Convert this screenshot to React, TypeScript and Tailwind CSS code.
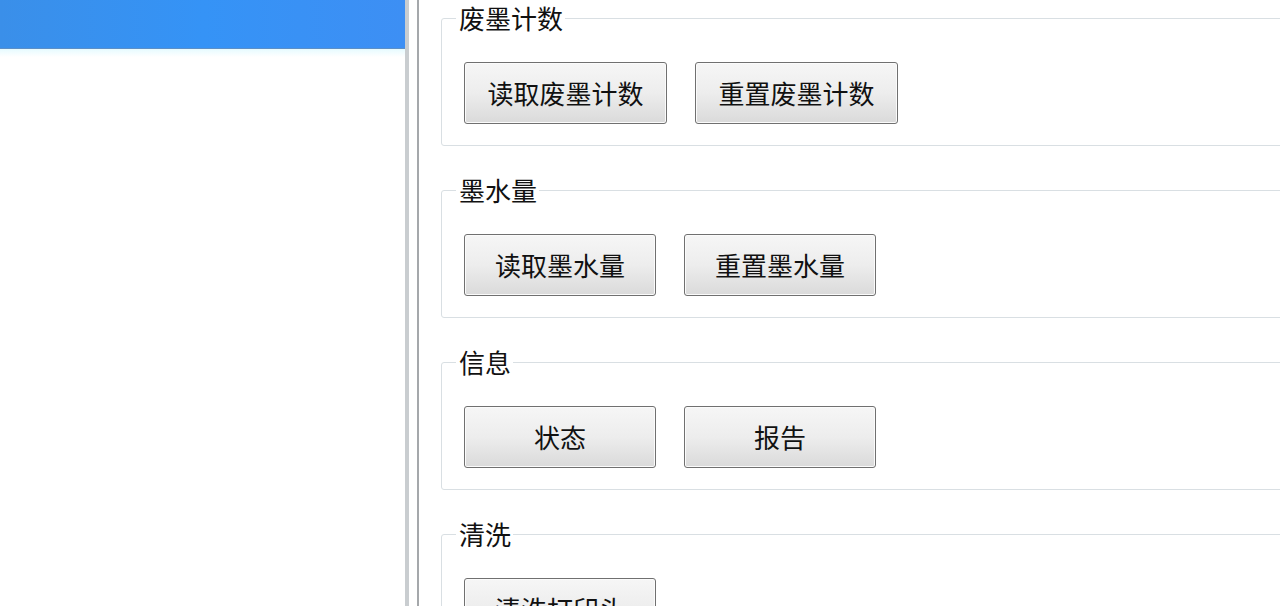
import React from "react";

type Group = {
  title: string;
  buttons: string[];
  wide?: boolean;
};

const groups: Group[] = [
  { title: "废墨计数", buttons: ["读取废墨计数", "重置废墨计数"], wide: true },
  { title: "墨水量", buttons: ["读取墨水量", "重置墨水量"] },
  { title: "信息", buttons: ["状态", "报告"] },
  { title: "清洗", buttons: ["清洗打印头"] },
];

function WinButton({ label, wide }: { label: string; wide?: boolean }) {
  return (
    <button
      className={`${wide ? "w-[203px]" : "w-[192px]"} h-[62px] shrink-0 rounded-[3px] border border-[#707070] bg-gradient-to-b from-[#f6f6f6] via-[#ededed] to-[#dadada] shadow-[inset_0_0_0_1px_#fbfbfb] text-[26px] leading-none text-[#111111]`}
    >
      {label}
    </button>
  );
}

function GroupBox({ group, first }: { group: Group; first?: boolean }) {
  return (
    <fieldset
      className={`${first ? "mt-[3px]" : "mt-[29px]"} ml-[22px] mr-[-20px] rounded-[3px] border border-[#d9dfe3] pl-[22px] pb-[21px] pt-0`}
    >
      <legend className="-ml-[8px] pl-[3px] pr-[2px] text-[26px] leading-[30px] text-[#111111]">
        {group.title}
      </legend>
      <div className="flex gap-[28px] pt-[29px]">
        {group.buttons.map((b) => (
          <WinButton key={b} label={b} wide={group.wide} />
        ))}
      </div>
    </fieldset>
  );
}

export default function App() {
  return (
    <div
      className="flex h-[606px] w-[1280px] overflow-hidden bg-white"
      style={{ fontFamily: '"Noto Sans CJK SC", "Noto Sans", sans-serif' }}
    >
      {/* left list */}
      <div className="w-[405px] shrink-0 bg-white">
        <div className="h-[49px] border-b border-[#5d8fc6] bg-gradient-to-r from-[#3a8fe9] via-[#3593f6] to-[#3d8ff4]" />
        <div className="h-[8px] bg-gradient-to-b from-[#e6fbff] to-white" />
      </div>

      {/* splitter */}
      <div className="w-[14px] shrink-0 border-l-[4px] border-r-[2px] border-l-[#c9cdd0] border-r-[#a5a8ab] bg-white" />

      {/* right panel */}
      <div className="flex-1 overflow-hidden bg-white">
        {groups.map((g, i) => (
          <GroupBox key={g.title} group={g} first={i === 0} />
        ))}
      </div>
    </div>
  );
}
